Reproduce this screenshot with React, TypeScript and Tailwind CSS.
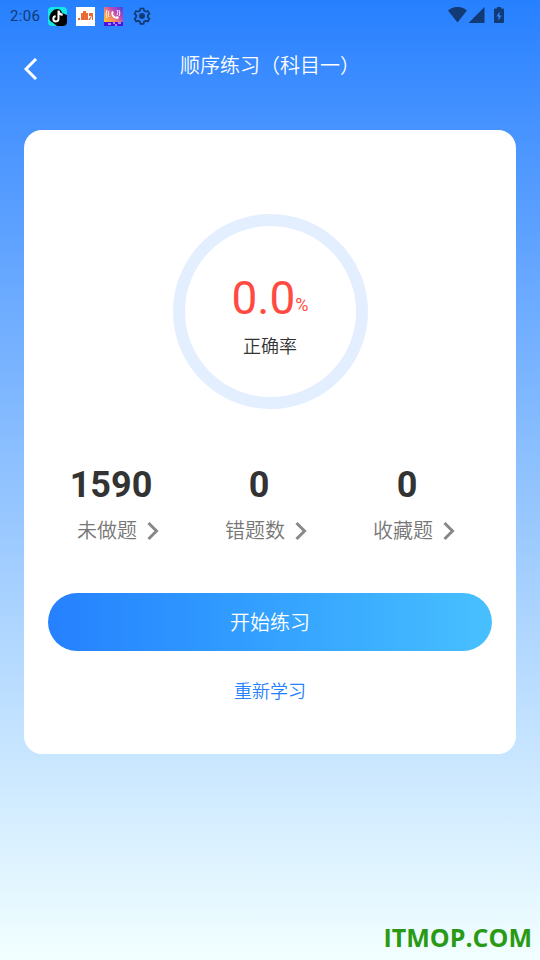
const stats = [
  { label: "未做题", value: "1590" },
  { label: "错题数", value: "0" },
  { label: "收藏题", value: "0" },
];

function StatusBar() {
  return (
    <div className="flex h-8 items-center justify-between pl-[10px] pr-[34px] text-[#123a75]">
      <div className="flex items-center gap-2">
        <span className="w-8 whitespace-nowrap text-[15px] leading-5 tracking-wide">2:06</span>

        {/* TikTok */}
        <svg width="19" height="19" viewBox="0 0 19 19" className="ml-[-2px]">
          <rect width="19" height="19" rx="4" fill="#12e6e6" />
          <path d="M9 2c3 0 4 1 5 4l5 2v7a4 4 0 0 1-4 4H9l-5-4C1 14 1 10 2 8c1-3 4-6 7-6z" fill="#000" />
          <path d="M10.500 3.500v8.500a2.600 2.600 0 1 1-2.800-2.800M10.500 4c.4 2.400 1.800 3.600 4.200 3.800" fill="none" stroke="#fff" strokeWidth="2" />
        </svg>

        {/* Orange app */}
        <svg width="19" height="19" viewBox="0 0 19 19" className="ml-[1px]">
          <rect width="19" height="19" fill="#fff" />
          <path d="M2 11h2v2H2zM5 6h2V4h3v2h2v7H5zM13 6h4v7h-1V9l-2 4h-2l3-4h-2z" fill="#ea6a35" />
        </svg>

        {/* Call app */}
        <svg width="19" height="19" viewBox="0 0 19 19" className="ml-[1px]">
          <defs>
            <linearGradient id="callApp" x1="0" y1="1" x2="1" y2="0">
              <stop offset="0.15" stopColor="#ffc02a" />
              <stop offset="0.45" stopColor="#f0806a" />
              <stop offset="0.65" stopColor="#c04ab8" />
              <stop offset="1" stopColor="#4a3fe0" />
            </linearGradient>
          </defs>
          <rect width="19" height="19" fill="url(#callApp)" />
          <rect y="15" width="19" height="4" fill="#4a10e8" />
          <path d="M8 4c-2 4 1 8 6 8l1-2-2-1-1 1c-2-1-3-2-3-4l1-1z" fill="#fff" />
          <path d="M5 4c-1 2-1 4 0 6M3 3c-1 3-1 6 0 8M13 3c1 2 1 3 0 5M15 3c1 2 1 4 0 6" fill="none" stroke="#fff" />
          <path d="M4 17h3M9 16h2M11 18h2M14 16h3" stroke="#fff" />
        </svg>

        <svg width="20" height="20" viewBox="0 0 24 24" className="ml-[1px]" fill="currentColor">
          <path fillRule="evenodd" d="M9.300 2h5.400l.5 2.700 1.700 1 2.600-.9 2.700 4.700-2.100 1.800v1.900l2.100 1.800-2.700 4.700-2.600-.9-1.700 1-.5 2.700H9.300l-.5-2.700-1.700-1-2.600.9L1.800 15l2.100-1.800v-1.900L1.800 9.500l2.700-4.700 2.600.9 1.700-1zM11 4l-.5 2.200-3 1.700-2.100-.7-1 1.700L6.100 10.400v3.500l-1.700 1.500 1 1.700 2.100-.7 3 1.700L11 20.300h2l.5-2.200 3-1.700 2.100.7 1-1.700-1.700-1.500v-3.500l1.700-1.500-1-1.700-2.100.7-3-1.700L13 4z" />
          <circle cx="12" cy="12" r="3.600" />
        </svg>
      </div>

      <svg width="58" height="18" viewBox="0 0 58 18" fill="currentColor">
        <path d="M0 3.500C5.500-1.200 13.500-1.200 19 3.500L9.500 15.500z" />
        <path d="M36.500 0v16H20.500z" />
        <path fillRule="evenodd" d="M49 0h4v1.500h2a1 1 0 0 1 1 1V15a1 1 0 0 1-1 1h-8a1 1 0 0 1-1-1V2.500a1 1 0 0 1 1-1h2zM51.500 4.500L48.500 9.500h2v4l3-5h-2z" />
      </svg>
    </div>
  );
}

function Chevron() {
  return (
    <svg width="12" height="20" viewBox="0 0 12 20" fill="none" stroke="#888" strokeWidth="3">
      <path d="M1.500 2l8 8-8 8" />
    </svg>
  );
}

export default function App() {
  return (
    <div className="relative min-h-screen bg-linear-to-b from-[#2680ff] to-[#f2ffff] font-[Roboto,'Noto_Sans_CJK_SC',sans-serif]">
      <StatusBar />

      {/* HEADER */}
      <header className="grid h-[74px] grid-cols-[1fr_auto_1fr] items-center px-6 text-white">
        <button type="button" aria-label="返回" className="w-6">
          <svg width="14" height="22" viewBox="0 0 14 22" fill="none" stroke="currentColor" strokeWidth="3">
            <path d="M12 1L2 11l10 10" />
          </svg>
        </button>
        <h1 className="pb-[6px] text-xl leading-7 font-[350]">顺序练习（科目一）</h1>
      </header>

      {/* CARD */}
      <main className="mx-6 mt-6 rounded-[18px] bg-white px-6 pb-[46px] pt-[84px]">
        <div className="mx-auto flex size-[195px] flex-col items-center rounded-full border-12 border-[#e3efff] pt-[44px]">
          <p className="flex items-end text-[#ff4a42]">
            <span className="text-[46px] leading-[56px]">0.0</span>
            <span className="text-lg leading-[42px]">%</span>
          </p>
          <p className="mt-[7px] text-lg leading-7 font-[350] text-[#333]">正确率</p>
        </div>

        <div className="mt-[54px] grid grid-cols-3">
          {stats.map((stat) => (
            <button key={stat.label} type="button" className="flex flex-col items-center">
              <span className="pr-[22px] text-4xl leading-[44px] font-bold text-[#333]">{stat.value}</span>
              <span className="mt-2 flex items-center gap-[10px] pr-2 text-xl leading-8 font-[350] text-[#777]">
                {stat.label}
                <Chevron />
              </span>
            </button>
          ))}
        </div>

        <button
          type="button"
          className="mt-[46px] h-[58px] w-full rounded-full bg-linear-to-r from-[#2680ff] to-[#48c0ff] pt-[2px] text-xl font-[350] text-white"
        >
          开始练习
        </button>
        <button type="button" className="mx-auto mt-[25px] block text-lg leading-8 font-[350] text-[#2680ff]">
          重新学习
        </button>
      </main>

      <p className="absolute right-2 bottom-[5px] font-['Open_Sans',sans-serif] text-[25px] leading-9 font-bold text-[#2a9a14]">
        ITMOP.COM
      </p>
    </div>
  );
}
